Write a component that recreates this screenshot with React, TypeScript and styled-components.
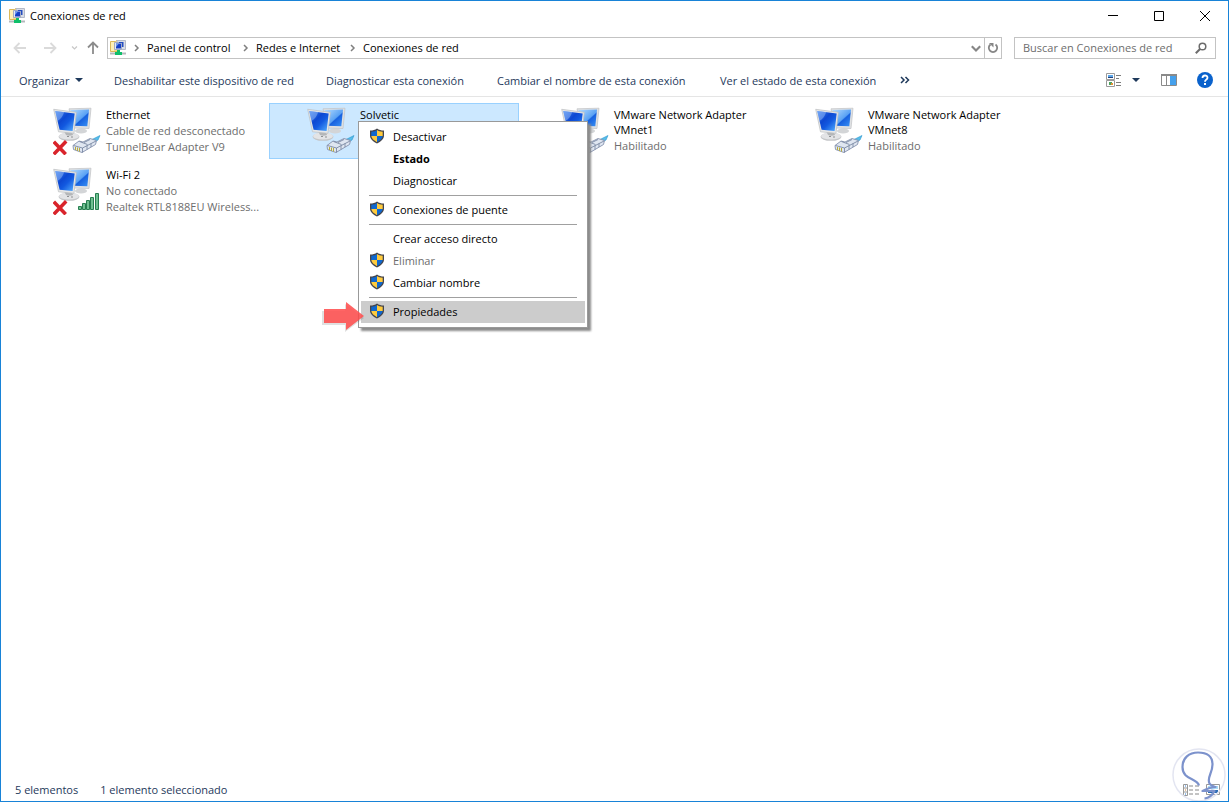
import React from "react";
import styled, { createGlobalStyle, css } from "styled-components";

const GlobalStyle = createGlobalStyle`
  * { box-sizing: border-box; }
  body { margin: 0; background: #fff; }
  body, button, input { font-family: "Open Sans", "Noto Sans", sans-serif; font-size: 11px; }
  button { border: 0; padding: 0; background: none; color: inherit; }
  svg { display: block; flex: none; }
`;

const ink = "#1e395b";
const line = "#c3c3c3";

const Window = styled.div`
  display: flex;
  flex-direction: column;
  min-height: 100vh;
  position: relative;
  overflow: hidden;
  border: 1px solid #1883d7;
  background: #fff;
  color: #000;
  line-height: 16px;
`;

const TitleBar = styled.header`
  display: flex;
  align-items: center;
  height: 30px;
  padding-left: 8px;
`;

const Title = styled.h1`
  flex: 1;
  margin: 0 0 0 5px;
  font-size: 11px;
  font-weight: 400;
`;

const CaptionButton = styled.button`
  display: flex;
  align-items: center;
  justify-content: center;
  width: 46px;
  height: 28px;
`;

const AddressRow = styled.div`
  display: flex;
  align-items: center;
  height: 33px;
  padding: 0 12px 0 9px;
`;

const NavButton = styled.button<{ $width: number }>`
  display: flex;
  align-items: center;
  justify-content: center;
  width: ${(p) => p.$width}px;
  height: 22px;
`;

const AddressBox = styled.nav`
  display: flex;
  align-items: center;
  flex: 1;
  height: 22px;
  padding-left: 2px;
  border: 1px solid ${line};
`;

const Crumb = styled.a<{ $width: number }>`
  width: ${(p) => p.$width}px;
  white-space: nowrap;
  color: #000;
  text-decoration: none;
`;

const Separator = styled.span`
  display: flex;
  justify-content: center;
  width: 21px;
`;

const AddressButton = styled.button<{ $divided?: boolean }>`
  display: flex;
  align-items: center;
  justify-content: center;
  width: 17px;
  height: 20px;
  ${(p) => p.$divided && css`border-left: 1px solid ${line};`}
`;

const Spacer = styled.div`
  flex: 1;
`;

const SearchBox = styled.label`
  display: flex;
  align-items: center;
  width: 202px;
  height: 22px;
  margin-left: 12px;
  padding: 0 8px;
  border: 1px solid ${line};
`;

const SearchInput = styled.input`
  flex: 1;
  min-width: 0;
  border: 0;
  padding: 0;
  outline: 0;
  background: none;
  &::placeholder { color: #6d6d6d; opacity: 1; }
`;

const CommandBar = styled.div`
  display: flex;
  align-items: center;
  height: 33px;
  padding: 0 15px 0 18px;
  border-bottom: 1px solid #e5e5e5;
  color: ${ink};
`;

const Command = styled.button<{ $width: number }>`
  display: flex;
  align-items: center;
  gap: 6px;
  width: ${(p) => p.$width}px;
  margin-right: 30px;
  white-space: nowrap;
`;

const ToolButton = styled.button<{ $gap?: number }>`
  margin-left: ${(p) => p.$gap ?? 0}px;
`;

const Content = styled.main`
  flex: 1;
  padding: 6px 14px;
`;

const Grid = styled.ul`
  display: grid;
  grid-template-columns: repeat(auto-fill, 250px);
  gap: 4px;
  margin: 0;
  padding: 0;
  list-style: none;
`;

const Connection = styled.li<{ $selected?: boolean }>`
  position: relative;
  display: flex;
  align-items: flex-start;
  gap: 5px;
  height: 56px;
  padding: 3px 0 0 37px;
  border: 1px solid ${(p) => (p.$selected ? "#99d1ff" : "transparent")};
  background: ${(p) => (p.$selected ? "#cce8ff" : "transparent")};
`;

const Details = styled.div`
  width: 157px;
`;

const Name = styled.div`
  margin-bottom: 1px;
  line-height: 15px;
`;

const Detail = styled.div`
  color: #6d6d6d;
  white-space: nowrap;
`;

const Menu = styled.div`
  position: absolute;
  z-index: 1;
  top: 17px;
  left: 88px;
  width: 230px;
  padding: 4px 2px;
  border: 1px solid #999;
  background: #fff;
  box-shadow: 3px 3px 2px #8c8c8c;
`;

const MenuItem = styled.button<{ $strong?: boolean; $active?: boolean }>`
  display: grid;
  grid-template-columns: 16px 1fr;
  gap: 8px;
  align-items: center;
  width: 224px;
  height: 22px;
  padding: 0 0 2px 8px;
  text-align: left;
  font-weight: ${(p) => (p.$strong ? 700 : 400)};
  background: ${(p) => (p.$active ? "#ccc" : "transparent")};
  &:disabled { color: #6d6d6d; }
`;

const MenuRule = styled.hr`
  margin: 3px 8px;
  border: 0;
  border-top: 1px solid #a0a0a0;
`;

const Pointer = styled.div`
  position: absolute;
  z-index: 2;
  top: 197px;
  left: 51px;
`;

const StatusBar = styled.footer`
  display: flex;
  align-items: center;
  gap: 22px;
  height: 22px;
  padding: 0 8px 0 14px;
  color: ${ink};
`;

const ViewButtons = styled.div`
  display: flex;
  gap: 7px;
  margin-left: auto;
`;

const Watermark = styled.div`
  position: absolute;
  right: 2px;
  bottom: 0;
  pointer-events: none;
`;

const NetworkFolderIcon = () => (
  <svg width="16" height="16" viewBox="0 0 16 16" aria-hidden="true">
    <path d="M0.500 1.500h5l1-1h1v11h-7z" fill="#f7dc83" stroke="#dcb95a" />
    <path d="M1 2h3v9H1z" fill="#fff0b5" />
    <path d="M7 .5h8.500v9H7z" fill="#d9dde6" stroke="#b4bac8" />
    <path d="M4.500 2.500h7v7h-7z" fill="#e6e9f2" stroke="#a3abc2" />
    <path d="M6 3.500h5v5H6z" fill="#163fc4" />
    <path d="M6 3.500h3L6 7z" fill="#6f9cf4" />
    <path d="M9 2h4.500v5H12V3H9z" fill="#244dc0" />
    <path d="M0 13.500h16" stroke="#b4b8bc" strokeWidth="2" />
    <path d="M7 10h3v2h2v3H5v-3h2z" fill="#0fbf6a" />
  </svg>
);

const ChevronRight = () => (
  <svg width="6" height="8" viewBox="0 0 6 8" aria-hidden="true">
    <path d="M1 1l3 3-3 3" fill="none" stroke="#808080" strokeWidth="1.500" />
  </svg>
);

const ArrowIcon = ({ dir }: { dir: "back" | "forward" | "up" }) => {
  const turn = { back: 0, forward: 180, up: 90 }[dir];
  return (
    <svg width="14" height="14" viewBox="0 0 14 14" aria-hidden="true">
      <g transform={`rotate(${turn} 7 7)`} fill="none" stroke={dir === "up" ? "#8c8c8c" : "#dadada"} strokeWidth="1.800">
        <path d="M1.500 7H13M6.500 2L1.500 7l5 5" />
      </g>
    </svg>
  );
};

const ChevronDown = ({ size, color }: { size: number; color: string }) => (
  <svg width={size} height={size} viewBox="0 0 10 10" aria-hidden="true">
    <path d="M1.500 3.500L5 7l3.500-3.500" fill="none" stroke={color} strokeWidth="1.800" />
  </svg>
);

const Caret = () => (
  <svg width="8" height="4" viewBox="0 0 8 4" aria-hidden="true">
    <path d="M0 0h8L4 4z" fill={ink} />
  </svg>
);

const Shield = () => (
  <svg width="16" height="16" viewBox="0 0 16 16" aria-hidden="true">
    <path d="M8 .5C6 2 4 2.500 1 2.600v4.900c0 3.500 3 6 7 8 4-2 7-4.500 7-8V2.600C12 2.500 10 2 8 .5z" fill="#45454b" />
    <path d="M8 2C6.500 3 5 3.500 2.300 3.700V8H8z" fill="#0f68cf" />
    <path d="M8 2c1.500 1 3 1.500 5.700 1.700V8H8z" fill="#ffcb3d" />
    <path d="M2.300 8H8v6.200C5 12.500 2.600 10.500 2.300 8z" fill="#ffcb3d" />
    <path d="M13.700 8H8v6.200c3-1.700 5.400-3.700 5.700-6.200z" fill="#0f68cf" />
  </svg>
);

type Badge = "cable" | "wifi";

const AdapterIcon = ({ badge, offline }: { badge: Badge; offline?: boolean }) => (
  <svg width="48" height="48" viewBox="0 0 48 48" aria-hidden="true">
    <defs>
      <linearGradient id="screen" x1="0" y1="0" x2="1" y2="1">
        <stop offset="0" stopColor="#3f84f0" />
        <stop offset="0.400" stopColor="#0d48d2" />
        <stop offset="0.600" stopColor="#1259e0" />
        <stop offset="1" stopColor="#55b0ff" />
      </linearGradient>
      <linearGradient id="back" x1="0" y1="0" x2="1" y2="1">
        <stop offset="0" stopColor="#b5dcff" />
        <stop offset="0.550" stopColor="#5aa2f4" />
        <stop offset="0.600" stopColor="#1761df" />
        <stop offset="1" stopColor="#3a93f6" />
      </linearGradient>
    </defs>
    <ellipse cx="28" cy="24" rx="6" ry="2.500" fill="#d3d5d7" />
    <path d="M16 1.800L38 1.200l-2 20.300-16-.5z" fill="#dfe1e3" stroke="#c0c2c4" strokeWidth=".7" />
    <path d="M17.500 3l18.500-.4L34.300 19.300 20 18.800z" fill="url(#back)" />
    <ellipse cx="16" cy="29.800" rx="10.500" ry="4" fill="#c4c6c8" />
    <ellipse cx="16" cy="29" rx="10" ry="3.600" fill="#e3e4e6" />
    <path d="M11 24l8 1 1 3c-2.500 1-5 1-7 0z" fill="#b4b6b8" />
    <path d="M14 29.500h2M18 30h2" stroke="#8f9193" />
    <path d="M.7 2.300L23.300 5.300l-2.300 21L5.500 24.800z" fill="#e6e7e8" stroke="#bcbec0" strokeWidth=".7" />
    <path d="M2.200 3.900L21.700 6.500 19.600 24 6.600 22.700z" fill="url(#screen)" />
    <path d="M2.200 3.900l9 1.200C10 9 8 12 4.500 14z" fill="#b8d6ff" opacity=".4" />
    {badge === "cable" ? (
      <g>
        <path d="M38 33l9-4.500-2 4.500-5 3z" fill="#57bdea" stroke="#2995cc" strokeWidth=".6" />
        <path d="M20 38.500l6-4.500 4 1 7-3.500 6.500 2-1 4-13.500 8-8.500-3z" fill="#dfe6f1" stroke="#8491ad" strokeWidth=".9" />
        <path d="M20.500 38.500l9 2.500 13.500-7M29.500 41v4.500M26.500 34.500l8 3M31 35.500l6-3M34 38.500v4M38 36.500v3.500" fill="none" stroke="#6f7d9b" strokeWidth=".8" />
        <path d="M22.500 40v3M24.500 40.500v3.500M26.500 41v3.500" stroke="#b9ac39" />
      </g>
    ) : (
      <g fill="#6fc091" stroke="#277e50" strokeWidth="1">
        <path d="M25.500 39.500h3v3h-3zM29.500 36.500h3v6h-3zM33.500 33.500h3v9h-3zM37.500 30.500h3v12h-3zM42.500 26.500h3v16h-3z" />
      </g>
    )}
    {offline && (
      <path d="M2 36l9.500 10M12 35.500L2 46" fill="none" stroke="#d9242b" strokeWidth="3.500" strokeLinecap="square" />
    )}
  </svg>
);

const RedArrow = () => (
  <svg width="46" height="34" viewBox="0 0 46 34" aria-hidden="true">
    <path d="M1 10h23V3l19 14-19 14v-7H1z" fill="#000" opacity=".12" />
    <path d="M3 8h22V1l18 14-18 14v-7H3z" fill="#ff4a4a" opacity=".85" />
  </svg>
);

const ListIcon = () => (
  <svg width="16" height="12" viewBox="0 0 16 12" aria-hidden="true">
    <path d="M.5.5h4v11h-4zM.5 4h4M.5 8h4" fill="none" stroke="#999" />
    <path d="M6 2h4M12 2h4M6 6h4M12 6h4M6 10h4M12 10h4" stroke="#888" />
    <path d="M2 2h1M2 10h1" stroke="#2f7cd6" />
    <path d="M2 6h1" stroke="#d67a2f" />
  </svg>
);

const TilesIcon = () => (
  <svg width="14" height="12" viewBox="0 0 14 12" aria-hidden="true">
    <path d="M.5.5h13v10H.5z" fill="#fff" stroke="#999" />
    <path d="M2 2h10v3H2z" fill="#a8dcf8" />
    <path d="M2 7c3-2 6-1 10-1v3H2z" fill="#2b6cb5" />
  </svg>
);

type Adapter = { name: string; details: string[]; badge: Badge; offline?: boolean; selected?: boolean };

const adapters: Adapter[] = [
  { name: "Ethernet", details: ["Cable de red desconectado", "TunnelBear Adapter V9"], badge: "cable", offline: true },
  { name: "Solvetic", details: [], badge: "cable", selected: true },
  { name: "VMware Network Adapter VMnet1", details: ["Habilitado"], badge: "cable" },
  { name: "VMware Network Adapter VMnet8", details: ["Habilitado"], badge: "cable" },
  { name: "Wi-Fi 2", details: ["No conectado", "Realtek RTL8188EU Wireless..."], badge: "wifi", offline: true },
];

type Entry = { label: string; shield?: boolean; strong?: boolean; active?: boolean; disabled?: boolean };

const menuGroups: Entry[][] = [
  [{ label: "Desactivar", shield: true }, { label: "Estado", strong: true }, { label: "Diagnosticar" }],
  [{ label: "Conexiones de puente", shield: true }],
  [{ label: "Crear acceso directo" }, { label: "Eliminar", shield: true, disabled: true }, { label: "Cambiar nombre", shield: true }],
  [{ label: "Propiedades", shield: true, active: true }],
];

const crumbs = [
  { label: "Panel de control", width: 88 },
  { label: "Redes e Internet", width: 86 },
  { label: "Conexiones de red", width: 98 },
];

const commands = [
  { label: "Deshabilitar este dispositivo de red", width: 182 },
  { label: "Diagnosticar esta conexión", width: 141 },
  { label: "Cambiar el nombre de esta conexión", width: 193 },
  { label: "Ver el estado de esta conexión", width: 150 },
];

const ContextMenu = () => (
  <>
    <Menu role="menu">
      {menuGroups.map((group, i) => (
        <React.Fragment key={i}>
          {i > 0 && <MenuRule />}
          {group.map((e) => (
            <MenuItem key={e.label} role="menuitem" $strong={e.strong} $active={e.active} disabled={e.disabled}>
              {e.shield ? <Shield /> : <span />}
              {e.label}
            </MenuItem>
          ))}
        </React.Fragment>
      ))}
    </Menu>
    <Pointer><RedArrow /></Pointer>
  </>
);

export default function App() {
  return (
    <Window>
      <GlobalStyle />
      <TitleBar>
        <NetworkFolderIcon />
        <Title>Conexiones de red</Title>
        <CaptionButton aria-label="Minimizar">
          <svg width="11" height="11" viewBox="0 0 11 11"><path d="M0 4.500h10" stroke="#000" /></svg>
        </CaptionButton>
        <CaptionButton aria-label="Maximizar">
          <svg width="11" height="11" viewBox="0 0 11 11"><path d="M.5.5h9v9h-9z" fill="none" stroke="#000" /></svg>
        </CaptionButton>
        <CaptionButton aria-label="Cerrar">
          <svg width="11" height="11" viewBox="0 0 11 11"><path d="M0 0l10 10M10 0L0 10" stroke="#000" /></svg>
        </CaptionButton>
      </TitleBar>

      <AddressRow>
        <NavButton $width={20} aria-label="Atrás"><ArrowIcon dir="back" /></NavButton>
        <NavButton $width={40} aria-label="Adelante"><ArrowIcon dir="forward" /></NavButton>
        <NavButton $width={8} aria-label="Recientes"><ChevronDown size={7} color="#c8c8c8" /></NavButton>
        <NavButton $width={29} aria-label="Arriba"><ArrowIcon dir="up" /></NavButton>
        <AddressBox aria-label="Ruta">
          <NetworkFolderIcon />
          {crumbs.map((c, i) => (
            <React.Fragment key={c.label}>
              <Separator><ChevronRight /></Separator>
              <Crumb href="#" $width={c.width}>{c.label}</Crumb>
            </React.Fragment>
          ))}
          <Spacer />
          <AddressButton aria-label="Ubicaciones anteriores"><ChevronDown size={12} color="#868686" /></AddressButton>
          <AddressButton $divided aria-label="Actualizar">
            <svg width="12" height="12" viewBox="0 0 12 12">
              <path d="M8.500 2.500a4.200 4.200 0 1 1-5 0" fill="none" stroke="#868686" strokeWidth="1.800" />
              <path d="M2 1h4.500v4.500z" fill="#868686" />
            </svg>
          </AddressButton>
        </AddressBox>
        <SearchBox>
          <SearchInput aria-label="Buscar" placeholder="Buscar en Conexiones de red" />
          <svg width="12" height="12" viewBox="0 0 12 12" aria-hidden="true">
            <circle cx="7.500" cy="4.500" r="3.300" fill="none" stroke="#6c6c6c" strokeWidth="1.500" />
            <path d="M5 7L.8 11.200" stroke="#6c6c6c" strokeWidth="2" />
          </svg>
        </SearchBox>
      </AddressRow>

      <CommandBar>
        <Command $width={65}>Organizar <Caret /></Command>
        {commands.map((c) => (
          <Command key={c.label} $width={c.width}>{c.label}</Command>
        ))}
        <ToolButton aria-label="Más comandos">
          <svg width="10" height="8" viewBox="0 0 10 8"><path d="M1 1l3 3-3 3M5.500 1l3 3-3 3" fill="none" stroke={ink} strokeWidth="1.500" /></svg>
        </ToolButton>
        <Spacer />
        <ToolButton aria-label="Cambiar vista">
          <svg width="16" height="15" viewBox="0 0 16 15">
            <path d="M.5.500h8v6h-8zM.5 7.500h8v6h-8z" fill="#fff" stroke="#9a9a9a" />
            <path d="M2 2h5v3H2z" fill="#5aa5e8" />
            <path d="M2 4h5v1H2z" fill="#1f3f7c" />
            <path d="M3 9h3v3H3z" fill="#49a25c" />
            <path d="M5 10h2v2H5z" fill="#e49236" />
            <path d="M10 2.500h5M10 5.500h3M10 9.500h5M10 12.500h5" stroke="#7d7d7d" />
          </svg>
        </ToolButton>
        <ToolButton $gap={10} aria-label="Más opciones"><Caret /></ToolButton>
        <ToolButton $gap={21} aria-label="Panel de vista previa">
          <svg width="17" height="12" viewBox="0 0 17 12">
            <path d="M.5.5h15v11H.5zM5.500 1v10" fill="#fff" stroke="#8a8a8a" />
            <path d="M0 1h16" stroke="#8a8a8a" strokeWidth="2" />
            <path d="M9 2h6v9H9z" fill="#45a0ec" />
          </svg>
        </ToolButton>
        <ToolButton $gap={19} aria-label="Ayuda">
          <svg width="16" height="16" viewBox="0 0 16 16">
            <circle cx="8" cy="8" r="8" fill="#0a62cc" />
            <path d="M5.500 6c0-3.300 5-3.300 5-.3 0 2-2.500 1.900-2.500 4" fill="none" stroke="#fff" strokeWidth="1.800" />
            <path d="M7 11h2v2H7z" fill="#fff" />
          </svg>
        </ToolButton>
      </CommandBar>

      <Content>
        <Grid>
          {adapters.map((a) => (
            <Connection key={a.name} $selected={a.selected}>
              <AdapterIcon badge={a.badge} offline={a.offline} />
              <Details>
                <Name>{a.name}</Name>
                {a.details.map((d) => <Detail key={d}>{d}</Detail>)}
              </Details>
              {a.selected && <ContextMenu />}
            </Connection>
          ))}
        </Grid>
      </Content>

      <StatusBar>
        <span>5 elementos</span>
        <span>1 elemento seleccionado</span>
        <ViewButtons>
          <button aria-label="Detalles"><ListIcon /></button>
          <button aria-label="Iconos grandes"><TilesIcon /></button>
        </ViewButtons>
      </StatusBar>
      <Watermark>
        <svg width="54" height="54" viewBox="0 0 54 54" aria-hidden="true">
          <circle cx="27" cy="28" r="26" fill="none" stroke="#e3e5f1" strokeWidth="1.500" />
          <path d="M27 38.500C25 31 10.500 33 10.500 20 10.500 11 17 5.500 26 5.500c9 0 14.500 4 14.500 12 0 9-6 13-3 19 1 2 3 2.500 6 3.500-5 0-9 2-13 4h12c-2 4-6 7-10 7.500" fill="none" stroke="#7c92cc" strokeWidth="2.200" strokeLinejoin="round" />
        </svg>
      </Watermark>
    </Window>
  );
}
